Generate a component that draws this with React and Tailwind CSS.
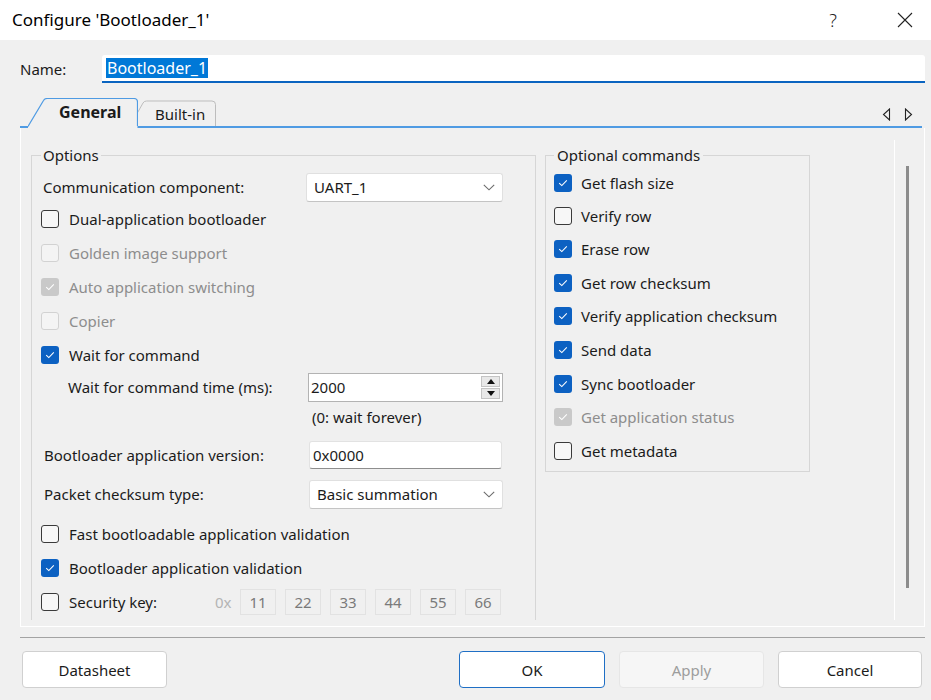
import React from "react";

const Check = ({ checked, disabled }) => {
  if (checked) {
    return (
      <span
        className={`flex h-[18px] w-[18px] shrink-0 items-center justify-center rounded-[3px] ${
          disabled ? "bg-[#c9c9c9]" : "bg-[#0c61c2]"
        }`}
      >
        <svg width="10" height="8" viewBox="0 0 10 8">
          <path d="M1.2 4.2 L3.8 6.6 L8.8 1.4" stroke="white" strokeWidth="1.1" fill="none" />
        </svg>
      </span>
    );
  }
  return (
    <span
      className={`h-[18px] w-[18px] shrink-0 rounded-[3px] border ${
        disabled ? "border-[#d2d2d2] bg-[#f4f4f4]" : "border-[#3a3a3a] bg-[#f7f7f7]"
      }`}
    />
  );
};

const CheckRow = ({ label, checked, disabled, h, gap = "gap-[10px]" }) => (
  <div className={`flex items-center ${gap} ${h}`}>
    <Check checked={checked} disabled={disabled} />
    <span className={disabled ? "text-[#8d8d8d]" : "text-[#1b1b1b]"}>{label}</span>
  </div>
);

const Chevron = () => (
  <svg width="12" height="7" viewBox="0 0 12 7" className="mr-[7px]">
    <path d="M0.8 0.8 L6 5.8 L11.2 0.8" stroke="#6b6b6b" strokeWidth="1.1" fill="none" />
  </svg>
);

const Combo = ({ value, w }) => (
  <div
    className={`flex h-[29px] ${w} items-center justify-between rounded-[3px] border border-[#e0e0e0] border-b-[#c4c4c4] bg-white pl-[7px]`}
  >
    <span>{value}</span>
    <Chevron />
  </div>
);

const commands = [
  { label: "Get flash size", checked: true, h: "h-[33px]" },
  { label: "Verify row", checked: false, h: "h-[33px]" },
  { label: "Erase row", checked: true, h: "h-[34px]" },
  { label: "Get row checksum", checked: true, h: "h-[33px]" },
  { label: "Verify application checksum", checked: true, h: "h-[33px]" },
  { label: "Send data", checked: true, h: "h-[35px]" },
  { label: "Sync bootloader", checked: true, h: "h-[33px]" },
  { label: "Get application status", checked: true, disabled: true, h: "h-[34px]" },
  { label: "Get metadata", checked: false, h: "h-[33px]" },
];

const keyBytes = ["11", "22", "33", "44", "55", "66"];

export default function App() {
  return (
    <div className="h-[700px] w-[931px] overflow-hidden font-['Noto_Sans',sans-serif] text-[15px] leading-[20px] text-[#1b1b1b]">
      {/* title bar */}
      <div className="flex h-[40px] items-center bg-white pl-[12px]">
        <span className="text-[17px] text-black">Configure 'Bootloader_1'</span>
        <span className="ml-auto mr-[60px] text-[18px] font-light text-[#222]">?</span>
        <svg width="16" height="16" viewBox="0 0 16 16" className="mr-[18px]">
          <path d="M1 1 L15 15 M15 1 L1 15" stroke="#222" strokeWidth="1.1" />
        </svg>
      </div>

      <div className="h-[660px] bg-[#f0f0f0]">
        {/* name row */}
        <div className="flex h-[43px] items-end pl-[20px]">
          <div className="flex h-[28px] w-full items-center">
            <span className="w-[82px]">Name:</span>
            <div className="flex h-[28px] w-[823px] items-center rounded-t-[3px] border-b-2 border-[#0a64c0] bg-white pl-[4px]">
              <span className="bg-[#0078d7] px-[1px] text-[16px] text-white">Bootloader_1</span>
            </div>
          </div>
        </div>

        {/* tabs */}
        <div className="relative mt-[15px] flex h-[30px] items-end pl-[28px]">
          <div className="absolute bottom-0 left-[20px] h-[2px] w-[902px] bg-[#4f9be3]" />
          <div className="relative z-10 flex h-[30px] w-[110px] items-center pb-[2px] pl-[31px] text-[16px] font-bold">
            <svg width="110" height="30" viewBox="0 0 110 30" className="absolute left-0 top-0">
              <path d="M0 30 L0 28.5 L15.5 2.5 Q16.5 0.5 19 0.5 L106 0.5 Q109.5 0.5 109.5 4 L109.5 30 Z" fill="#f0f0f0" />
              <path d="M0 28.5 L15.5 2.5 Q16.5 0.5 19 0.5 L106 0.5 Q109.5 0.5 109.5 4 L109.5 28" stroke="#4f9be3" strokeWidth="1.2" fill="none" />
            </svg>
            <span className="relative">General</span>
          </div>
          <div className="relative -ml-[8px] flex h-[30px] w-[86px] items-center pl-[25px] pt-[1px]">
            <svg width="86" height="30" viewBox="0 0 86 30" className="absolute left-0 top-0">
              <path d="M0 28 L13 5 Q14 3 16.5 3 L82 3 Q85.5 3 85.5 6.5 L85.5 28" stroke="#bdbdbd" strokeWidth="1" fill="#f0f0f0" />
            </svg>
            <span className="relative">Built-in</span>
          </div>
          <div className="ml-auto mr-[18px] flex h-[28px] items-center gap-[13px]">
            <svg width="9" height="13" viewBox="0 0 9 13">
              <path d="M7.5 1 L7.5 12 L1.5 6.5 Z" stroke="#222" strokeWidth="1.1" fill="none" />
            </svg>
            <svg width="9" height="13" viewBox="0 0 9 13">
              <path d="M1.5 1 L1.5 12 L7.5 6.5 Z" stroke="#222" strokeWidth="1.1" fill="none" />
            </svg>
          </div>
        </div>

        {/* tab panel */}
        <div className="ml-[20px] flex h-[499px] w-[905px] border-x border-b border-white pl-[10px] pt-[12px] pb-[6px]">
          <div className="flex h-[480px] w-[864px] items-start overflow-hidden border-r border-white pt-[5px]">
            {/* options */}
            <fieldset className="h-[490px] w-[505px] shrink-0 border border-[#d6d6d6] pl-[9px]">
              <legend className="px-[2px] leading-[20px]">Options</legend>
              <div className="mt-[7px] flex h-[30px] items-center">
                <span className="w-[265px] pl-[2px]">Communication component:</span>
                <Combo value="UART_1" w="w-[197px]" />
              </div>
              <CheckRow label="Dual-application bootloader" h="h-[34px]" />
              <CheckRow label="Golden image support" disabled h="h-[34px]" />
              <CheckRow label="Auto application switching" checked disabled h="h-[34px]" />
              <CheckRow label="Copier" disabled h="h-[34px]" />
              <CheckRow label="Wait for command" checked h="h-[34px]" />
              <div className="flex h-[30px] items-center pl-[27px]">
                <span className="w-[240px]">Wait for command time (ms):</span>
                <div className="flex h-[29px] w-[195px] items-center justify-between border border-[#b3b3b3] bg-white pl-[2px] pr-[2px]">
                  <span>2000</span>
                  <div className="flex flex-col gap-[1px]">
                    <div className="flex h-[11px] w-[19px] items-center justify-center border border-[#c4c4c4] bg-[#e8e8e8]">
                      <svg width="8" height="5" viewBox="0 0 8 5">
                        <path d="M0 5 L4 0 L8 5 Z" fill="#111" />
                      </svg>
                    </div>
                    <div className="flex h-[11px] w-[19px] items-center justify-center border border-[#c4c4c4] bg-[#e8e8e8]">
                      <svg width="8" height="5" viewBox="0 0 8 5">
                        <path d="M0 0 L8 0 L4 5 Z" fill="#111" />
                      </svg>
                    </div>
                  </div>
                </div>
              </div>
              <div className="flex h-[30px] items-center pl-[271px]">(0: wait forever)</div>
              <div className="mt-[9px] flex h-[28px] items-center">
                <span className="w-[268px] pl-[3px]">Bootloader application version:</span>
                <div className="flex h-[28px] w-[193px] items-center rounded-[3px] border border-[#e2e2e2] border-b-[#8e8e8e] bg-white pl-[3px]">
                  0x0000
                </div>
              </div>
              <div className="mt-[10px] flex h-[30px] items-center">
                <span className="w-[268px] pl-[3px]">Packet checksum type:</span>
                <Combo value="Basic summation" w="w-[194px]" />
              </div>
              <CheckRow label="Fast bootloadable application validation" h="mt-[8px] h-[34px]" />
              <CheckRow label="Bootloader application validation" checked h="h-[33px]" />
              <div className="flex h-[36px] items-center">
                <div className="flex w-[174px] items-center gap-[10px]">
                  <Check />
                  <span>Security key:</span>
                </div>
                <span className="w-[25px] text-[#b4b4b4]">0x</span>
                <div className="flex gap-[9px]">
                  {keyBytes.map((b) => (
                    <div
                      key={b}
                      className="flex h-[26px] w-[36px] items-center justify-center border border-[#e2e2e2] text-[#7a7a7a]"
                    >
                      {b}
                    </div>
                  ))}
                </div>
              </div>
            </fieldset>

            {/* optional commands */}
            <fieldset className="ml-[9px] w-[265px] shrink-0 border border-[#d6d6d6] pb-[4px] pl-[8px]">
              <legend className="px-[3px] leading-[20px]">Optional commands</legend>
              <div className="mt-[1px]">
                {commands.map((c) => (
                  <CheckRow
                    key={c.label}
                    label={c.label}
                    checked={c.checked}
                    disabled={c.disabled}
                    h={c.h}
                    gap="gap-[9px]"
                  />
                ))}
              </div>
            </fieldset>
          </div>
          <div className="pl-[11px] pt-[26px]">
            <div className="h-[422px] w-[3px] bg-[#8c8c8c]" />
          </div>
        </div>

        {/* separator */}
        <div className="ml-[20px] mt-[10px] h-px w-[905px] bg-[#a3a3a3]" />

        {/* buttons */}
        <div className="mt-[13px] flex pl-[22px]">
          <button className="h-[37px] w-[145px] rounded-[4px] border border-[#d0d0d0] bg-white">Datasheet</button>
          <button className="ml-[292px] h-[37px] w-[146px] rounded-[4px] border border-[#1f6fc5] bg-white">OK</button>
          <button className="ml-[14px] h-[37px] w-[145px] rounded-[4px] border border-[#e6e6e6] bg-[#f6f6f6] text-[#9d9d9d]">
            Apply
          </button>
          <button className="ml-[14px] h-[37px] w-[144px] rounded-[4px] border border-[#d0d0d0] bg-white">Cancel</button>
        </div>
      </div>
    </div>
  );
}
